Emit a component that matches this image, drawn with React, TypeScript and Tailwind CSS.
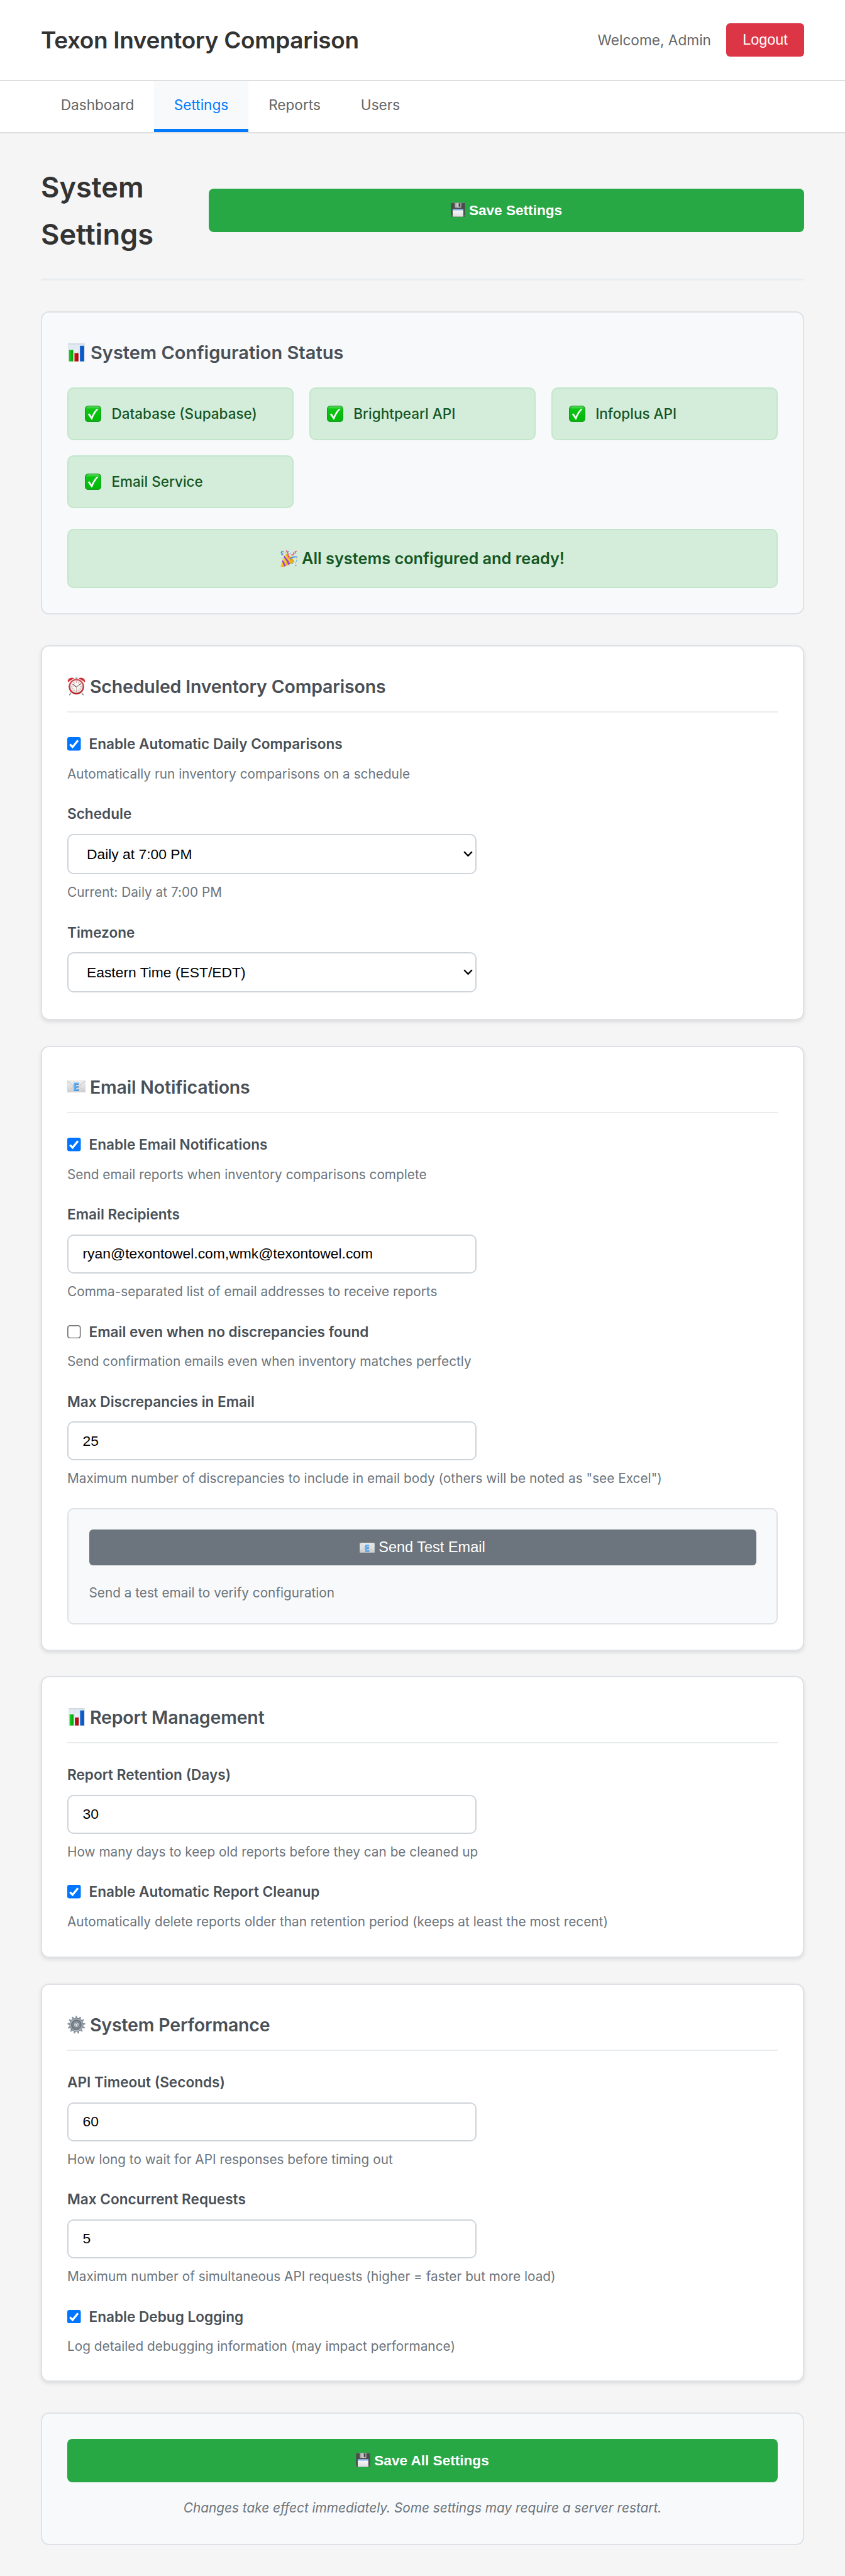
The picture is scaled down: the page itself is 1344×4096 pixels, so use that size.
import type { ReactNode } from "react";
import { useState } from "react";

/* ---------- icons ---------- */

function ChartIcon({ className }: { className: string }) {
  return (
    <svg viewBox="0 0 32 32" className={className} role="img" aria-label="Bar chart">
      <defs>
        <linearGradient id="cbg" x1="0" y1="0" x2="0" y2="1">
          <stop offset="0" stopColor="#ccd9e4" />
          <stop offset="0.12" stopColor="#e3eaf1" />
          <stop offset="1" stopColor="#f3f6f9" />
        </linearGradient>
        <linearGradient id="cgreen" x1="0" x2="1">
          <stop offset="0" stopColor="#17d321" />
          <stop offset="1" stopColor="#0a9a12" />
        </linearGradient>
        <linearGradient id="cred" x1="0" x2="1">
          <stop offset="0" stopColor="#d61313" />
          <stop offset="1" stopColor="#a30505" />
        </linearGradient>
        <linearGradient id="cblue" x1="0" x2="1">
          <stop offset="0" stopColor="#1670dd" />
          <stop offset="1" stopColor="#0a45a8" />
        </linearGradient>
      </defs>
      <rect x="2" y="0" width="28" height="32" fill="url(#cbg)" stroke="#c6d2dc" strokeWidth="0.6" />
      <path d="M11.6 1v30M20.4 1v30M3 8h26M3 16h26M3 24h26" stroke="#d3dde6" strokeWidth="0.5" />
      <rect x="3" y="11.4" width="7.4" height="20.2" fill="url(#cgreen)" />
      <rect x="12.6" y="17" width="7" height="14.6" fill="url(#cred)" />
      <rect x="22" y="4.2" width="7.4" height="27.4" fill="url(#cblue)" />
    </svg>
  );
}

function CheckMark({ className }: { className: string }) {
  return (
    <svg viewBox="0 0 32 32" className={className} role="img" aria-label="Configured">
      <defs>
        <linearGradient id="okbg" x1="0" y1="0" x2="0" y2="1">
          <stop offset="0" stopColor="#6ae06c" />
          <stop offset="0.2" stopColor="#0cc514" />
          <stop offset="1" stopColor="#00b806" />
        </linearGradient>
      </defs>
      <rect x="0.7" y="0.7" width="30.6" height="30.6" rx="6" fill="url(#okbg)" stroke="#1c9a26" strokeWidth="1.4" />
      <path d="M5.6 17.2 L8.7 15.1 C10.6 17 12 19.2 13.1 21.6 C15.6 15.4 19 10.2 23.4 6.2 L26.6 6.6 C21.6 12 17.2 18.8 14.4 27.2 L12.6 27.2 C10.6 23.2 8.4 19.8 5.6 17.2 Z" fill="#fff" />
    </svg>
  );
}

function PartyIcon({ className }: { className: string }) {
  return (
    <svg viewBox="0 0 32 32" className={className} role="img" aria-label="Celebration">
      <defs>
        <linearGradient id="cone" x1="0" y1="0" x2="1" y2="1">
          <stop offset="0" stopColor="#ffe066" />
          <stop offset="0.5" stopColor="#f6c21f" />
          <stop offset="1" stopColor="#d98e0c" />
        </linearGradient>
      </defs>
      <path d="M9.5 6.5 C14 8.5 22.5 15.5 26.5 21.5 C20 25.5 9 30.5 2.5 32 C0.8 32 0.2 31.2 0.4 30 C2.5 22 6 12 9.5 6.5Z" fill="url(#cone)" />
      <path d="M7.6 10.4 C11.4 14.2 15.6 19.6 18.2 25.9 L14.6 27.6 C12.4 21.4 9.4 16.4 6.2 13.6Z" fill="#9a45d6" />
      <path d="M4.2 18.4 C6.8 21.2 9 25 10 29.6 L6.6 30.8 C6 27 4.6 23.6 3 21.6Z" fill="#9a45d6" />
      <path d="M9.5 6.5 C14.5 7.6 24 15 26.5 21.5 C22 20 13 12.5 9.5 6.5Z" fill="#e0a51c" />
      <path d="M15 13 C14.5 8 15 4 11.5 1.2" fill="none" stroke="#ef4a6b" strokeWidth="2" strokeLinecap="round" />
      <path d="M18.5 16 C22 12.8 26.5 11.6 31 12.6" fill="none" stroke="#4a86e8" strokeWidth="2.2" strokeLinecap="round" />
      <path d="M1.5 1.2 L3.8 2.6 L1.2 5 L4.2 6.2 L2.4 8.4 L5.6 9" fill="none" stroke="#4178d8" strokeWidth="1.5" />
      <path d="M22 11 L21.6 8 L25.4 8.4 L24.6 4.8 L28.6 5.4 L27.6 2.2 L31 1.6" fill="none" stroke="#ee5a78" strokeWidth="1.5" />
      <g fill="#f06a86">
        <rect x="5" y="1.6" width="2.2" height="2.2" />
        <circle cx="29" cy="28.6" r="1.3" />
        <circle cx="3" cy="15.8" r="0.9" />
      </g>
      <g fill="#5b8fe8">
        <circle cx="15.6" cy="2" r="1.1" />
        <circle cx="22.6" cy="24.6" r="1.1" />
        <circle cx="30.6" cy="20" r="1" />
        <circle cx="18.6" cy="6.4" r="1" />
      </g>
      <g fill="#e8b04a">
        <circle cx="28.6" cy="23.6" r="1.2" />
        <circle cx="8.8" cy="3.6" r="1" />
        <circle cx="30" cy="16.4" r="0.9" />
      </g>
    </svg>
  );
}

const CLOCK_TICKS = [0, 30, 60, 90, 120, 150, 180, 210, 240, 270, 300, 330];

function AlarmIcon({ className }: { className: string }) {
  return (
    <svg viewBox="0 0 32 32" className={className} role="img" aria-label="Alarm clock">
      <defs>
        <radialGradient id="face" cx="0.5" cy="0.4" r="0.6">
          <stop offset="0" stopColor="#ffffff" />
          <stop offset="1" stopColor="#dfe3e4" />
        </radialGradient>
        <linearGradient id="rim" x1="0" y1="0" x2="0" y2="1">
          <stop offset="0" stopColor="#e0555a" />
          <stop offset="1" stopColor="#b5161c" />
        </linearGradient>
      </defs>
      <path d="M6.5 27.5 L3.6 31.4 M25.5 27.5 L28.4 31.4" stroke="#6f7378" strokeWidth="1.5" />
      <path d="M0.8 7.2 C0.4 3.6 4 0.4 8.2 0.5 C10.8 0.6 12.2 1.8 12.2 2.6 C8 4 4.4 6 2.6 8 C1.8 8.4 1 8.2 0.8 7.2Z" fill="#d3343a" />
      <path d="M31.2 7.2 C31.6 3.6 28 0.4 23.8 0.5 C21.2 0.6 19.8 1.8 19.8 2.6 C24 4 27.6 6 29.4 8 C30.2 8.4 31 8.2 31.2 7.2Z" fill="#d3343a" />
      <rect x="14" y="0.4" width="4" height="2.4" rx="1" fill="#8f9aa1" />
      <circle cx="16" cy="16.4" r="13.6" fill="url(#rim)" />
      <circle cx="16" cy="16.4" r="11.3" fill="url(#face)" stroke="#a9473f" strokeWidth="0.5" />
      {CLOCK_TICKS.map((a) => (
        <path key={a} d="M16 6.8 V9.8" stroke="#e07a7a" strokeWidth="0.9" transform={`rotate(${a} 16 16.4)`} />
      ))}
      <path d="M16 17 L10.6 12.6" stroke="#3d4145" strokeWidth="1.2" strokeLinecap="round" />
      <path d="M16 17 L24 11" stroke="#3d4145" strokeWidth="1" strokeLinecap="round" />
      <path d="M16 15 V25.4" stroke="#c9a27c" strokeWidth="0.7" />
    </svg>
  );
}

function MailIcon({ className }: { className: string }) {
  return (
    <svg viewBox="0 0 30 20" preserveAspectRatio="none" className={className} role="img" aria-label="E-mail">
      <defs>
        <linearGradient id="env" x1="0" y1="0" x2="0" y2="1">
          <stop offset="0" stopColor="#f1f1f1" />
          <stop offset="1" stopColor="#cfcfcf" />
        </linearGradient>
      </defs>
      <rect x="0.2" y="0.2" width="29.6" height="19.6" rx="0.8" fill="url(#env)" stroke="#bdbdbd" strokeWidth="0.4" />
      <path d="M0.8 19.2 L11.6 9 M29.2 19.2 L18.4 9" stroke="#bcbcbc" strokeWidth="0.6" />
      <path d="M0.6 0.8 L13 11.4 Q15 12.8 17 11.4 L29.4 0.8" fill="#ebebeb" stroke="#a9a9a9" strokeWidth="0.7" />
      <path d="M11 4.2 H19 V7.2 H14.4 V9.4 H18.4 V12.2 H14.4 V14.8 H19.2 V17.8 H11Z" fill="#3f6f9f" />
      <path d="M11 3.6 H18.8 V6.4 H14 V8.9 H18.2 V11.6 H14 V14.2 H19 V17 H11Z" fill="#5fb0f5" />
    </svg>
  );
}

const GEAR_TEETH = [0, 27.7, 55.4, 83.1, 110.8, 138.5, 166.2, 193.8, 221.5, 249.2, 276.9, 304.6, 332.3];

function GearIcon({ className }: { className: string }) {
  return (
    <svg viewBox="0 0 32 32" className={className} role="img" aria-label="Gear">
      <defs>
        <linearGradient id="gear" x1="0" y1="0" x2="1" y2="1">
          <stop offset="0" stopColor="#8b959e" />
          <stop offset="0.5" stopColor="#6f7881" />
          <stop offset="1" stopColor="#9aa4ac" />
        </linearGradient>
      </defs>
      {GEAR_TEETH.map((a) => (
        <path key={a} d="M13.8 6 L14.8 0.4 H17.2 L18.2 6Z" fill="#8f99a2" transform={`rotate(${a} 16 16)`} />
      ))}
      <circle cx="16" cy="16" r="12.2" fill="url(#gear)" />
      <circle cx="16" cy="16" r="10.3" fill="none" stroke="#b9c1c8" strokeWidth="1.2" />
      <circle cx="16" cy="16" r="7.8" fill="#858e96" stroke="#5b636b" strokeWidth="1" />
      <circle cx="16" cy="16" r="4.6" fill="#c3cad0" stroke="#555d64" strokeWidth="0.9" />
      <circle cx="16" cy="16" r="2" fill="#f4f6f7" stroke="#6b737a" strokeWidth="0.8" />
    </svg>
  );
}

function FloppyIcon({ className }: { className: string }) {
  return (
    <svg viewBox="0 0 32 32" className={className} role="img" aria-label="Floppy disk">
      <defs>
        <linearGradient id="shutter" x1="0" x2="1">
          <stop offset="0" stopColor="#9b9b9b" />
          <stop offset="0.5" stopColor="#d2d2d2" />
          <stop offset="1" stopColor="#a5a5a5" />
        </linearGradient>
        <linearGradient id="paper" x1="0" y1="0" x2="0" y2="1">
          <stop offset="0" stopColor="#ffffff" />
          <stop offset="1" stopColor="#dcdcdc" />
        </linearGradient>
      </defs>
      <path d="M0.5 1 H31.5 V31.5 H1.8 L0.5 30.2Z" fill="#4b4b4b" />
      <rect x="0.5" y="0.4" width="31" height="1.2" fill="#7a7a7a" />
      <rect x="8.6" y="0.8" width="14.6" height="10.6" fill="url(#shutter)" />
      <rect x="17.4" y="1.6" width="3.8" height="7.8" fill="#454545" />
      <rect x="4.2" y="14" width="23.6" height="17.4" fill="url(#paper)" />
      <rect x="4.2" y="14" width="23.6" height="3.4" fill="#7fa9dc" />
      <rect x="1.6" y="28.4" width="1.6" height="1.6" fill="#8a8a8a" />
      <rect x="28.8" y="28.4" width="1.6" height="1.6" fill="#8a8a8a" />
    </svg>
  );
}

/* ---------- building blocks ---------- */

function Card({ icon, title, className, children }: { icon: ReactNode; title: string; className: string; children: ReactNode }) {
  return (
    <section className={`rounded-[13px] border-2 border-[#dee2e6] bg-white p-10 shadow-[0_3px_6px_rgba(0,0,0,0.1)] ${className}`}>
      <h3 className="flex h-[65px] items-start border-b-2 border-[#e9ecef] text-[28.5px] font-semibold leading-[48px] tracking-[-0.006em] text-[#495057]">
        <span className="mr-[7px] flex h-[46px] w-[29px] items-center justify-center">{icon}</span>
        {title}
      </h3>
      <div className="flex flex-col gap-[28.8px] pt-[31px]">{children}</div>
    </section>
  );
}

function Help({ children }: { children: ReactNode }) {
  return <p className="mt-[13px] text-[20.75px] leading-[32px] tracking-[0.001em] text-[#6c757d]">{children}</p>;
}

function Toggle({ label, help, on }: { label: string; help: string; on: boolean }) {
  const [checked, setChecked] = useState(on);
  return (
    <div>
      <button type="button" role="checkbox" aria-checked={checked} onClick={() => setChecked(!checked)} className="flex h-[37.5px] items-center gap-[13px] text-[22.6px] font-semibold leading-[37.5px] text-[#495057]">
        <svg viewBox="0 0 13 13" className="size-[21.5px] shrink-0">
          {checked ? (
            <>
              <rect width="13" height="13" rx="2" fill="#0075ff" />
              <path d="M2.6 7 L5.1 9.5 L10.3 3.2" fill="none" stroke="#fff" strokeWidth="2" />
            </>
          ) : (
            <rect x="0.5" y="0.5" width="12" height="12" rx="2" fill="#fff" stroke="#767676" />
          )}
        </svg>
        {label}
      </button>
      <Help>{help}</Help>
    </div>
  );
}

function Label({ children }: { children: ReactNode }) {
  return <span className="mb-[13px] block h-[37.5px] text-[22.6px] font-semibold leading-[37.5px] text-[#495057]">{children}</span>;
}

function TextField({ label, value, help }: { label: string; value: string; help: string }) {
  return (
    <div>
      <label className="block">
        <Label>{label}</Label>
        <input defaultValue={value} className="block h-[62px] w-[651px] rounded-[10px] border-2 border-[#ced4da] bg-white pl-[22.5px] font-['Liberation_Sans',Arial,sans-serif] text-[22.85px] text-black" />
      </label>
      <Help>{help}</Help>
    </div>
  );
}

function SelectField({ label, value, help }: { label: string; value: string; help?: string }) {
  return (
    <div>
      <label className="block">
        <Label>{label}</Label>
        <span className="relative block h-[64px] w-[651px]">
          <select defaultValue={value} className="size-full appearance-none rounded-[10px] border-2 border-[#ced4da] bg-white pl-[29px] font-['Liberation_Sans',Arial,sans-serif] text-[22.85px] text-black">
            <option>{value}</option>
          </select>
          <svg viewBox="0 0 15 10" className="pointer-events-none absolute right-[6px] top-[27px] h-[10px] w-[15px]">
            <path d="M1.2 1.2 L7.5 7.8 L13.8 1.2" fill="none" stroke="#000" strokeWidth="2.3" />
          </svg>
        </span>
      </label>
      {help && <Help>{help}</Help>}
    </div>
  );
}

function SaveButton({ children, className }: { children: ReactNode; className: string }) {
  return (
    <button type="button" className={`flex h-[69px] items-center justify-center gap-[6px] rounded-[8px] bg-[#28a745] font-['Liberation_Sans',Arial,sans-serif] text-[22.6px] font-bold text-white ${className}`}>
      <FloppyIcon className="mb-[2px] size-[23px]" />
      {children}
    </button>
  );
}

function StatusItem({ children }: { children: ReactNode }) {
  return (
    <div className="flex h-[84px] items-center gap-[16.5px] rounded-[10px] border-2 border-[#c3e6cb] bg-[#d4edda] pl-[26px] text-[22.5px] font-medium text-[#155724]">
      <CheckMark className="size-[26px]" />
      {children}
    </div>
  );
}

/* ---------- page ---------- */

export default function App() {
  return (
    <div className="min-h-[4096px] bg-[#f5f5f5] font-['Inter',sans-serif] text-[#333]">
      <header className="flex h-[129px] items-center justify-between border-b-2 border-[#dedede] bg-white px-[65px]">
        <h1 className="pt-px text-[37px] font-semibold tracking-[-0.0095em]">Texon Inventory Comparison</h1>
        <div className="flex items-center gap-[24px]">
          <span className="pt-px text-[22.65px] text-[#666]">Welcome, Admin</span>
          <button type="button" className="h-[53px] w-[124px] rounded-[6px] bg-[#dc3545] font-['Liberation_Sans',Arial,sans-serif] text-[23.45px] text-white">Logout</button>
        </div>
      </header>

      <nav className="flex h-[83px] border-b-2 border-[#dedede] bg-white px-[65px] text-[22.6px] text-[#666]">
        <a className="flex w-[180px] items-center justify-center border-b-[5px] border-transparent">Dashboard</a>
        <a className="flex w-[150px] items-center justify-center border-b-[5px] border-[#007bff] bg-[#f8f9fa] text-[#007bff]">Settings</a>
        <a className="flex w-[147px] items-center justify-center border-b-[5px] border-transparent">Reports</a>
        <a className="flex w-[126px] items-center justify-center border-b-[5px] border-transparent">Users</a>
      </nav>

      <main className="flex flex-col px-[65px] pt-[48px]">
        <div className="mb-[49px] flex h-[186px] items-start gap-8 border-b-[3px] border-[#e9ecef]">
          <h2 className="w-[235px] text-[45.2px] font-semibold leading-[75px]">System Settings</h2>
          <SaveButton className="mt-[40px] flex-1">Save Settings</SaveButton>
        </div>

        <section className="mb-[49px] h-[482px] rounded-[13px] border-2 border-[#dee2e6] bg-[#f8f9fa] p-10">
          <h3 className="mb-[32px] flex h-[47px] items-center text-[29px] font-semibold text-[#495057]">
            <span className="mr-[8px] flex w-[29px] items-center justify-center">
              <ChartIcon className="size-[29px]" />
            </span>
            System Configuration Status
          </h3>
          <div className="grid grid-cols-3 gap-x-[24.5px] gap-y-[24px]">
            <StatusItem>Database (Supabase)</StatusItem>
            <StatusItem>Brightpearl API</StatusItem>
            <StatusItem>Infoplus API</StatusItem>
            <StatusItem>Email Service</StatusItem>
          </div>
          <div className="mt-[33px] flex h-[94px] items-center justify-center gap-[7px] rounded-[10px] border-2 border-[#c3e6cb] bg-[#d4edda] text-[25.3px] font-semibold text-[#155724]">
            <PartyIcon className="size-[27px]" />
            All systems configured and ready!
          </div>
        </section>

        <Card className="mb-[41px] h-[596px]" icon={<AlarmIcon className="size-[29px]" />} title="Scheduled Inventory Comparisons">
          <Toggle on label="Enable Automatic Daily Comparisons" help="Automatically run inventory comparisons on a schedule" />
          <SelectField label="Schedule" value="Daily at 7:00 PM" help="Current: Daily at 7:00 PM" />
          <SelectField label="Timezone" value="Eastern Time (EST/EDT)" />
        </Card>

        <Card className="mb-[40px] h-[962px]" icon={<MailIcon className="mb-[2px] h-[19px] w-[29px]" />} title="Email Notifications">
          <Toggle on label="Enable Email Notifications" help="Send email reports when inventory comparisons complete" />
          <TextField label="Email Recipients" value="ryan@texontowel.com,wmk@texontowel.com" help="Comma-separated list of email addresses to receive reports" />
          <Toggle on={false} label="Email even when no discrepancies found" help="Send confirmation emails even when inventory matches perfectly" />
          <TextField label="Max Discrepancies in Email" value="25" help={'Maximum number of discrepancies to include in email body (others will be noted as "see Excel")'} />
          <div className="mt-[2px] h-[185px] rounded-[10px] border-2 border-[#dee2e6] bg-[#f8f9fa] px-[32.5px] pt-[32px]">
            <button type="button" className="mb-[28px] flex h-[57px] w-full items-center justify-center gap-[6px] rounded-[6px] bg-[#6c757d] font-['Liberation_Sans',Arial,sans-serif] text-[23.5px] text-white">
              <MailIcon className="h-[16px] w-[24px]" />
              Send Test Email
            </button>
            <p className="text-[20.75px] leading-[32px] text-[#6c757d]">Send a test email to verify configuration</p>
          </div>
        </Card>

        <Card className="mb-[41px] h-[448px]" icon={<ChartIcon className="size-[28px]" />} title="Report Management">
          <TextField label="Report Retention (Days)" value="30" help="How many days to keep old reports before they can be cleaned up" />
          <Toggle on label="Enable Automatic Report Cleanup" help="Automatically delete reports older than retention period (keeps at least the most recent)" />
        </Card>

        <Card className="mb-[49px] h-[633px]" icon={<GearIcon className="size-[29px]" />} title="System Performance">
          <TextField label="API Timeout (Seconds)" value="60" help="How long to wait for API responses before timing out" />
          <TextField label="Max Concurrent Requests" value="5" help="Maximum number of simultaneous API requests (higher = faster but more load)" />
          <Toggle on label="Enable Debug Logging" help="Log detailed debugging information (may impact performance)" />
        </Card>

        <section className="h-[211px] rounded-[13px] border-2 border-[#dee2e6] bg-[#f8f9fa] p-10">
          <SaveButton className="w-full">Save All Settings</SaveButton>
          <p className="mt-[25px] text-center text-[20.8px] italic leading-[32px] text-[#6c757d]">Changes take effect immediately. Some settings may require a server restart.</p>
        </section>
      </main>
    </div>
  );
}
